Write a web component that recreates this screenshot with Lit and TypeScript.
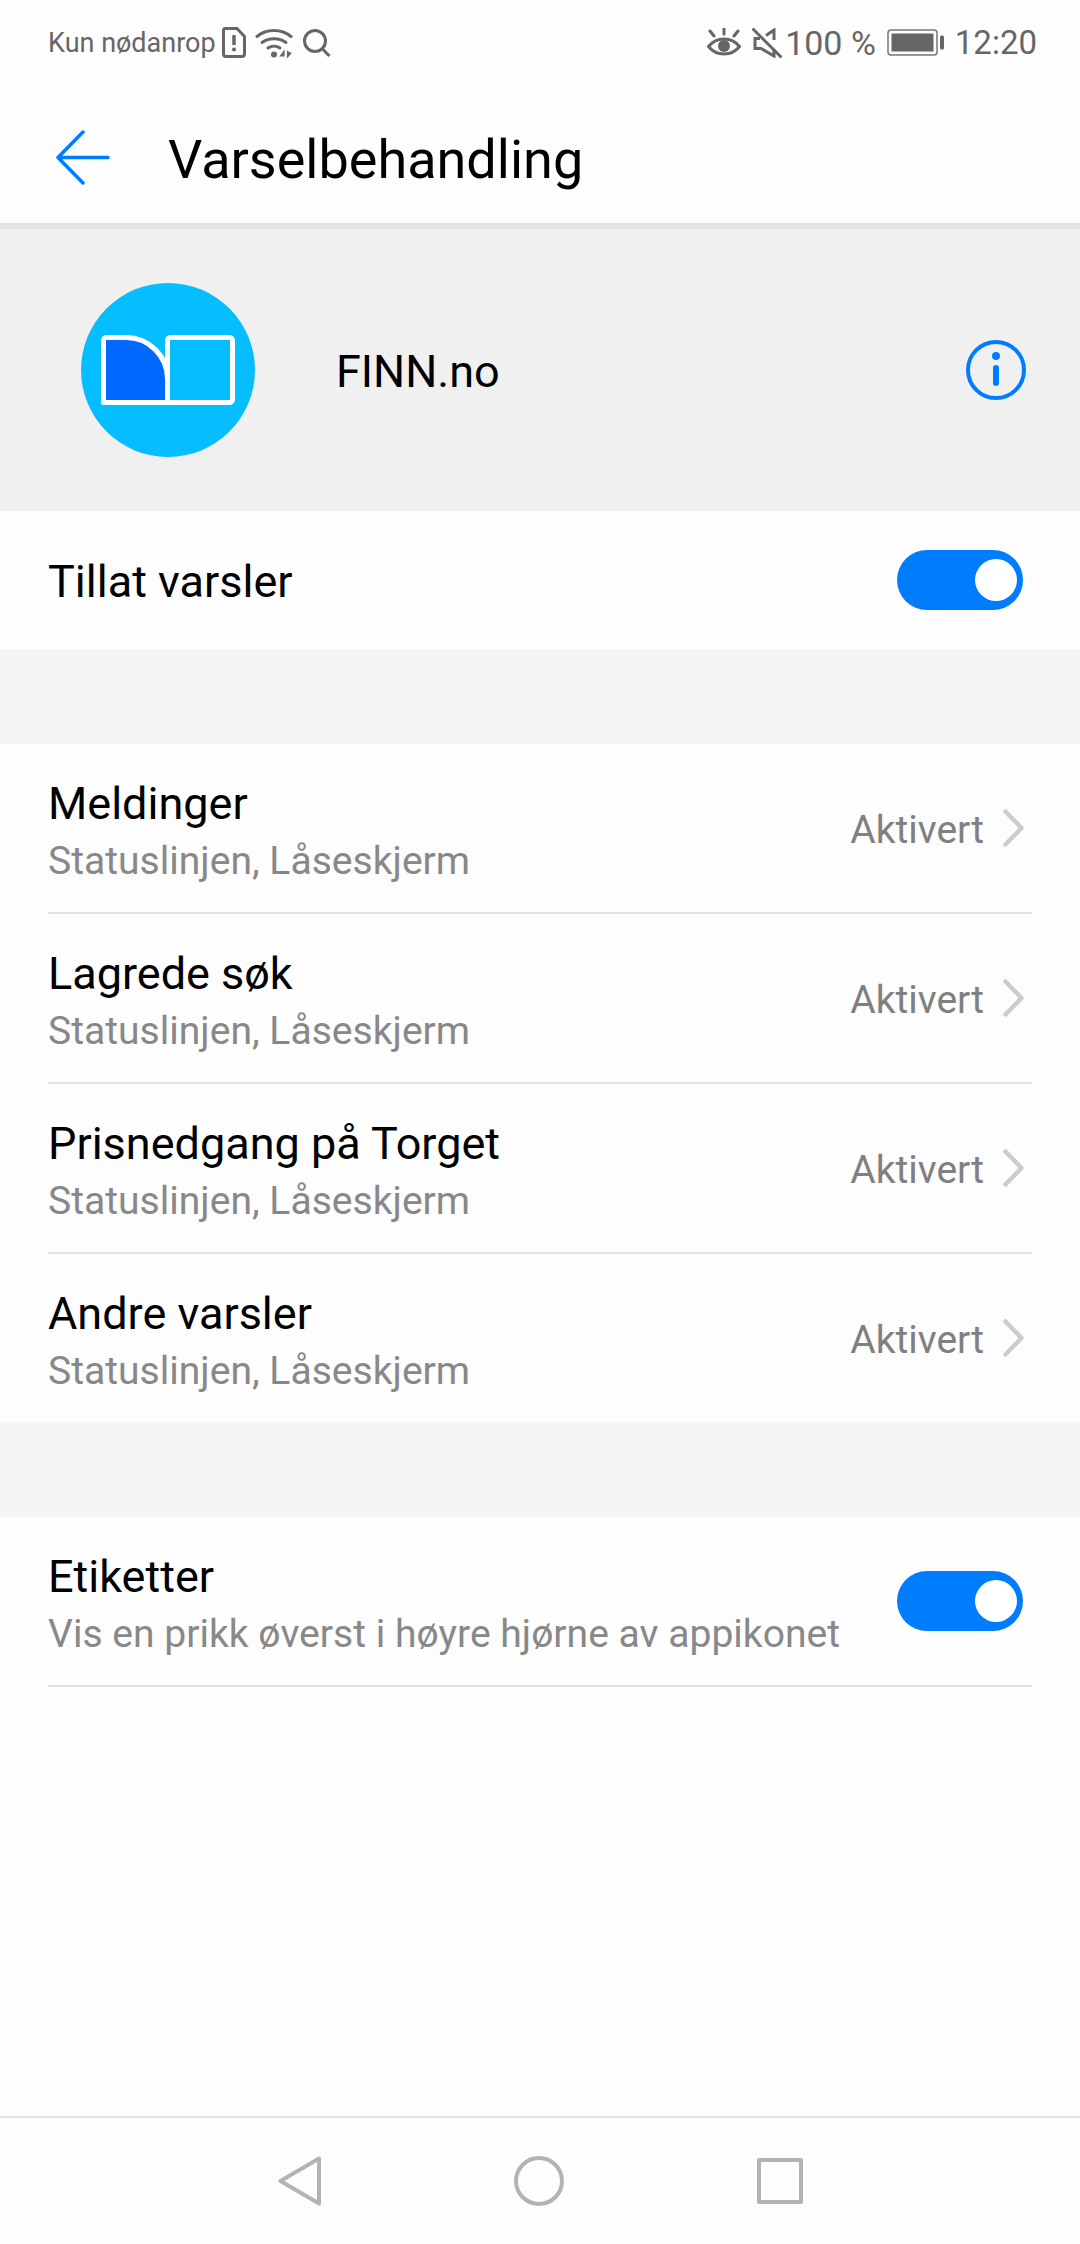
import { LitElement, html, css } from 'lit';
import { customElement } from 'lit/decorators.js';

const channels = 'Statuslinjen, Låseskjerm';
const categories = ['Meldinger', 'Lagrede søk', 'Prisnedgang på Torget', 'Andre varsler'];

@customElement('app-root')
export class AppRoot extends LitElement {
  static styles = css`
    :host {
      display: block;
      width: 1080px;
      height: 2244px;
      background: #fdfdfd;
      font-family: Roboto, sans-serif;
      color: #000;
    }
    .page {
      display: flex;
      flex-direction: column;
      height: 2244px;
    }
    .status {
      height: 85px;
      flex: none;
      display: flex;
      align-items: center;
      padding: 0 43px 0 48px;
      color: #666;
      font-size: 33px;
    }
    .status svg {
      flex: none;
      display: block;
    }
    .carrier {
      font-size: 27px;
      width: 174px;
      white-space: nowrap;
    }
    .percent {
      font-size: 34px;
    }
    .sim {
      margin-right: 9px;
    }
    .wifi {
      margin-right: 10px;
    }
    .mute {
      margin-left: 11px;
      margin-right: 3px;
    }
    .battery {
      margin-left: 11px;
      margin-right: 11px;
    }
    .spacer {
      flex: 1;
    }
    .header {
      height: 138px;
      flex: none;
      display: flex;
      align-items: center;
      box-sizing: border-box;
      padding-left: 56px;
      padding-top: 6px;
    }
    .title {
      font-size: 54px;
      margin-left: 58px;
      padding-top: 5px;
    }
    .rule {
      height: 6px;
      flex: none;
      background: #e2e2e2;
    }
    .app {
      height: 282px;
      flex: none;
      background: #f0f0f0;
      display: flex;
      align-items: center;
      box-sizing: border-box;
      padding: 0 54px 0 81px;
    }
    .app-name {
      font-size: 45px;
      margin-left: 81px;
      padding-top: 2px;
      flex: 1;
    }
    .row {
      display: flex;
      align-items: center;
      box-sizing: border-box;
      margin: 0 48px;
    }
    .allow {
      height: 138px;
      flex: none;
      font-size: 45px;
    }
    .allow span {
      flex: 1;
      padding-top: 2px;
    }
    .gap {
      height: 95px;
      flex: none;
      background: #f5f5f5;
    }
    .item {
      height: 170px;
      flex: none;
      border-bottom: 2px solid #e2e2e2;
    }
    .item.last {
      height: 168px;
      border-bottom: none;
    }
    .text {
      flex: 1;
      min-width: 0;
      padding-top: 10px;
    }
    .name {
      font-size: 45px;
      line-height: 56px;
    }
    .sub {
      font-size: 39.1px;
      line-height: 58px;
      color: #888;
      white-space: nowrap;
    }
    .state {
      font-size: 39px;
      color: #808080;
      margin-right: 19px;
      padding-top: 3px;
    }
    .chevron {
      margin-right: 8px;
    }
    .switch {
      width: 126px;
      height: 60px;
      border-radius: 30px;
      background: #007dff;
      flex: none;
      margin-right: 9px;
      display: flex;
      justify-content: flex-end;
      align-items: center;
      padding-right: 6px;
      box-sizing: border-box;
    }
    .knob {
      width: 42px;
      height: 42px;
      border-radius: 50%;
      background: #fff;
    }
    .nav {
      height: 126px;
      flex: none;
      border-top: 2px solid #e2e2e2;
      margin-top: auto;
      display: flex;
      align-items: center;
      padding-left: 278px;
      gap: 193px;
    }
    .nav svg {
      display: block;
    }
  `;

  private renderSwitch() {
    return html`<div class="switch"><div class="knob"></div></div>`;
  }

  private renderStatus() {
    return html`<div class="status">
      <span class="carrier">Kun nødanrop</span>
      <svg class="sim" width="24" height="31" viewBox="0 0 24 31" fill="none">
        <path d="M3 1.500h12l7.500 8V27a2.500 2.500 0 0 1-2.500 2.500H4A2.500 2.500 0 0 1 1.500 27V3A1.500 1.500 0 0 1 3 1.500z" stroke="#666" stroke-width="3"/>
        <path d="M12 8v10" stroke="#666" stroke-width="3.500"/>
        <circle cx="12" cy="22.500" r="2" fill="#666"/>
      </svg>
      <svg class="wifi" width="38" height="30" viewBox="0 0 38 30" fill="none" stroke="#666" stroke-width="3" stroke-linecap="round">
        <path d="M2 8.500C11.500 .5 26.500 .5 36 8.500"/>
        <path d="M7 14.500c7-5 17-5 24 0"/>
        <path d="M13 20c3.500-2.500 8.500-2.500 12 0"/>
        <circle cx="19" cy="26.500" r="3" fill="#666" stroke="none"/>
        <path d="M29 23l-3.500 5H29zM32.500 23v6l3.500-4" fill="#666" stroke-width="1.200"/>
      </svg>
      <svg width="28" height="28" viewBox="0 0 28 28" fill="none" stroke="#666" stroke-width="3">
        <circle cx="12" cy="12" r="10.500"/>
        <path d="M19.500 20l7 7"/>
      </svg>
      <div class="spacer"></div>
      <svg width="34" height="30" viewBox="0 0 34 30" fill="none" stroke="#666" stroke-width="3">
        <path d="M1.500 18.500c8-10 23-10 31 0-8 10-23 10-31 0z"/>
        <circle cx="17" cy="18" r="6" fill="#666" stroke="none"/>
        <path d="M17 1v5M3 3l4 5M31 3l-4 5" stroke-linecap="round"/>
      </svg>
      <svg class="mute" width="30" height="30" viewBox="0 0 30 30" fill="none" stroke="#666" stroke-width="3">
        <path d="M8 10.500H3v10h6l13 7.500v-7M22 12V2l-8 5.500"/>
        <path d="M1.500 1.500l27 27" stroke-linecap="round"/>
      </svg>
      <span class="percent">100 %</span>
      <svg class="battery" width="57" height="27" viewBox="0 0 57 27" fill="none">
        <rect x="1" y="1" width="49" height="25" rx="3" stroke="#777" stroke-width="1.500"/>
        <rect x="4.500" y="4.500" width="42" height="18" fill="#666"/>
        <rect x="53" y="6.500" width="4" height="14" rx="1.500" fill="#666"/>
      </svg>
      <span>12:20</span>
    </div>`;
  }

  render() {
    return html`<div class="page">
      ${this.renderStatus()}
      <div class="header">
        <svg width="54" height="55" viewBox="0 0 54 55" fill="none" stroke="#007dff" stroke-width="3.500" stroke-linecap="round" stroke-linejoin="round">
          <path d="M52 27.500H2M27 2L2 27.500 27 53"/>
        </svg>
        <span class="title">Varselbehandling</span>
      </div>
      <div class="rule"></div>
      <div class="app">
        <svg width="174" height="174" viewBox="0 0 174 174">
          <circle cx="87" cy="87" r="87" fill="#06bdff"/>
          <path d="M22.500 57.500a3 3 0 0 1 3-3H45C68 54.500 86.500 73 86.500 96v23.500h-64z" fill="#0069ff" stroke="#fff" stroke-width="5" stroke-linejoin="round"/>
          <path d="M86.500 119.500v-62a3 3 0 0 1 3-3h59a3 3 0 0 1 3 3v59a3 3 0 0 1-3 3z" fill="#06bdff" stroke="#fff" stroke-width="5" stroke-linejoin="round"/>
        </svg>
        <span class="app-name">FINN.no</span>
        <svg width="60" height="60" viewBox="0 0 60 60" fill="none">
          <circle cx="30" cy="30" r="28" stroke="#007dff" stroke-width="4"/>
          <circle cx="30" cy="16" r="4" fill="#007dff"/>
          <path d="M30 28v15" stroke="#007dff" stroke-width="6" stroke-linecap="round"/>
        </svg>
      </div>
      <div class="row allow"><span>Tillat varsler</span>${this.renderSwitch()}</div>
      <div class="gap"></div>
      ${categories.map(
        (name, i) => html`<div class="row item ${i === categories.length - 1 ? 'last' : ''}">
          <div class="text">
            <div class="name">${name}</div>
            <div class="sub">${channels}</div>
          </div>
          <span class="state">Aktivert</span>
          <svg class="chevron" width="21" height="38" viewBox="0 0 21 38" fill="none" stroke="#ccc" stroke-width="4.500" stroke-linecap="round" stroke-linejoin="round">
            <path d="M2.500 2.500l16 16.500-16 16.500"/>
          </svg>
        </div>`
      )}
      <div class="gap"></div>
      <div class="row item">
        <div class="text">
          <div class="name">Etiketter</div>
          <div class="sub">Vis en prikk øverst i høyre hjørne av appikonet</div>
        </div>
        ${this.renderSwitch()}
      </div>
      <div class="nav">
        <svg width="43" height="50" viewBox="0 0 43 50" fill="none" stroke="#b3b3b3" stroke-width="4" stroke-linejoin="round">
          <path d="M41 2.500v45L2.500 25z"/>
        </svg>
        <svg width="50" height="50" viewBox="0 0 50 50" fill="none" stroke="#b3b3b3" stroke-width="4">
          <circle cx="25" cy="25" r="23"/>
        </svg>
        <svg width="46" height="46" viewBox="0 0 46 46" fill="none" stroke="#b3b3b3" stroke-width="4" stroke-linejoin="round">
          <rect x="2" y="2" width="42" height="42"/>
        </svg>
      </div>
    </div>`;
  }
}
